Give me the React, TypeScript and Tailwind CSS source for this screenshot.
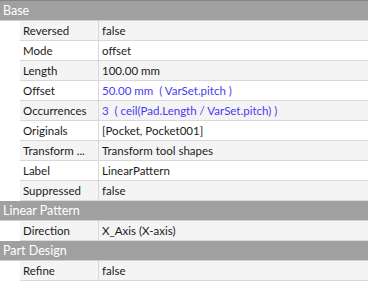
import { type ReactNode } from "react";

type Prop = { name: string; value: ReactNode; expr?: boolean };
type Group = { title: string; props: Prop[] };

const groups: Group[] = [
  {
    title: "Base",
    props: [
      { name: "Reversed", value: "false" },
      { name: "Mode", value: "offset" },
      { name: "Length", value: "100.00 mm" },
      { name: "Offset", value: "50.00 mm  ( VarSet.pitch )", expr: true },
      {
        name: "Occurrences",
        value: "3  ( ceil(Pad.Length / VarSet.pitch) )",
        expr: true,
      },
      { name: "Originals", value: "[Pocket, Pocket001]" },
      { name: "Transform ...", value: "Transform tool shapes" },
      { name: "Label", value: "LinearPattern" },
      { name: "Suppressed", value: "false" },
    ],
  },
  {
    title: "Linear Pattern",
    props: [{ name: "Direction", value: "X_Axis (X-axis)" }],
  },
  {
    title: "Part Design",
    props: [{ name: "Refine", value: "false" }],
  },
];

function Row({ prop, shaded }: { prop: Prop; shaded: boolean }) {
  return (
    <div className="flex h-5">
      <div className="w-5 shrink-0 bg-white" />
      <div
        className={`flex flex-1 border-b border-[#d9d9d9] ${
          shaded ? "bg-[#f4f4f4]" : "bg-white"
        }`}
      >
        <div className="flex w-[79px] shrink-0 items-center whitespace-pre border-r border-[#d9d9d9] pl-[3px] text-[#1b1b1b]">
          {prop.name}
        </div>
        <div
          className={`flex items-center whitespace-pre pl-[3px] ${
            prop.expr ? "text-[#4a3af5]" : "text-[#1b1b1b]"
          }`}
        >
          {prop.value}
        </div>
      </div>
    </div>
  );
}

export default function App() {
  return (
    <div
      className="w-[368px] h-[285px] bg-white text-[11.5px] leading-[19px]"
      style={{ fontFamily: 'Lato, "Open Sans", sans-serif' }}
    >
      <div className="h-px bg-[#858585]" />
      {groups.map((g) => (
        <div key={g.title}>
          <div className="flex h-5 items-center border-b border-[#d0d0d0] bg-[#a0a0a0] pl-[3px] text-[12.5px] text-white">
            {g.title}
          </div>
          {g.props.map((p, i) => (
            <Row key={p.name} prop={p} shaded={i % 2 === 0} />
          ))}
        </div>
      ))}
    </div>
  );
}
